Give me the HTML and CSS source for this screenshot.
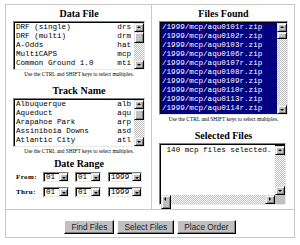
FILE: index.html
```html
<!DOCTYPE html>
<html>
<head>
  <title>File Order</title>
  <link rel="stylesheet" href="styles.css">
</head>
<body>
  <div class="frame">
    <div class="top">
      <div class="cell left">
        <p class="title">Data File</p>
        <div class="listbox short">
          <div class="items">
            <div class="item"><span>DRF (single)</span><span>drs</span></div>
            <div class="item"><span>DRF (multi)</span><span>drm</span></div>
            <div class="item"><span>A-Odds</span><span>hat</span></div>
            <div class="item"><span>MultiCAPS</span><span>mcp</span></div>
            <div class="item"><span>Common Ground 1.0</span><span>mti</span></div>
          </div>
          <div class="vscroll">
            <div class="arrow up"></div>
            <div class="track"><div class="thumb"></div></div>
            <div class="arrow down"></div>
          </div>
        </div>
        <p class="hint">Use the CTRL and SHIFT keys to select multiples.</p>

        <p class="title second">Track Name</p>
        <div class="listbox short">
          <div class="items">
            <div class="item"><span>Albuquerque</span><span>alb</span></div>
            <div class="item"><span>Aqueduct</span><span>aqu</span></div>
            <div class="item"><span>Arapahoe Park</span><span>arp</span></div>
            <div class="item"><span>Assiniboia Downs</span><span>asd</span></div>
            <div class="item"><span>Atlantic City</span><span>atl</span></div>
          </div>
          <div class="vscroll">
            <div class="arrow up"></div>
            <div class="track"><div class="thumb"></div></div>
            <div class="arrow down"></div>
          </div>
        </div>
        <p class="hint">Use the CTRL and SHIFT keys to select multiples.</p>

        <p class="title third">Date Range</p>
        <div class="date-row">
          <span class="date-label">From:</span>
          <div class="drop day"><span>01</span><div class="arrow down"></div></div>
          <div class="drop day"><span>01</span><div class="arrow down"></div></div>
          <div class="drop year"><span>1999</span><div class="arrow down"></div></div>
        </div>
        <div class="date-row">
          <span class="date-label">Thru:</span>
          <div class="drop day"><span>01</span><div class="arrow down"></div></div>
          <div class="drop day"><span>01</span><div class="arrow down"></div></div>
          <div class="drop year"><span>1999</span><div class="arrow down"></div></div>
        </div>
      </div>

      <div class="cell right">
        <p class="title">Files Found</p>
        <div class="listbox tall">
          <div class="items selected">
            <div class="item">/1999/mcp/aqu0101r.zip</div>
            <div class="item">/1999/mcp/aqu0102r.zip</div>
            <div class="item">/1999/mcp/aqu0103r.zip</div>
            <div class="item">/1999/mcp/aqu0106r.zip</div>
            <div class="item">/1999/mcp/aqu0107r.zip</div>
            <div class="item">/1999/mcp/aqu0108r.zip</div>
            <div class="item">/1999/mcp/aqu0109r.zip</div>
            <div class="item">/1999/mcp/aqu0110r.zip</div>
            <div class="item">/1999/mcp/aqu0113r.zip</div>
            <div class="item">/1999/mcp/aqu0114r.zip</div>
          </div>
          <div class="vscroll">
            <div class="arrow up"></div>
            <div class="track"><div class="thumb small"></div></div>
            <div class="arrow down"></div>
          </div>
        </div>
        <p class="hint">Use the CTRL and SHIFT keys to select multiples.</p>

        <p class="title fourth">Selected Files</p>
        <div class="textbox">
          <div class="text-main">
            <div class="text-area"> 140 mcp files selected.</div>
            <div class="vscroll">
              <div class="arrow up"></div>
              <div class="track"></div>
              <div class="arrow down"></div>
            </div>
          </div>
          <div class="hscroll">
            <div class="arrow left"></div>
            <div class="track"></div>
            <div class="arrow right"></div>
            <div class="corner"></div>
          </div>
        </div>
      </div>
    </div>

    <div class="bottom">
      <button class="win-button">Find Files</button>
      <button class="win-button">Select Files</button>
      <button class="win-button">Place Order</button>
    </div>
  </div>
</body>
</html>
```

FILE: styles.css
```css
body {
  margin: 0;
  background-color: white;
  color: black;
  font-family: "Liberation Serif", serif;
}

.frame {
  width: 288px;
  margin: 4px 0 0 5px;
  border: 1px solid #c8c8c8;
}

.top {
  display: grid;
  grid-template-columns: 146px 1fr;
  border-bottom: 1px solid #c8c8c8;
}

.cell {
  padding: 3px 6px 0 7px;
}

.left {
  border-right: 1px solid #c8c8c8;
  padding-bottom: 12px;
}

.title {
  margin: 0;
  font-size: 10px;
  line-height: 11px;
  font-weight: bold;
  text-align: center;
}

.title.second {
  margin-top: 8px;
}

.title.third {
  margin-top: 4px;
}

.title.fourth {
  margin-top: 8px;
}

.hint {
  margin: 1px 0 0;
  font-size: 5.4px;
  line-height: 6px;
  text-align: center;
  white-space: nowrap;
}

/* sunken list box */
.listbox {
  display: flex;
  margin-top: 2px;
  border: 1px solid;
  border-color: #808080 #e8e8e8 #e8e8e8 #808080;
  background-color: white;
}

.listbox.short {
  height: 47px;
}

.listbox.tall {
  height: 92px;
}

.items {
  flex: 1;
  min-width: 0;
  border-top: 1px solid #000;
  border-left: 1px solid #000;
  padding-left: 1px;
  font-family: "Liberation Mono", monospace;
  font-size: 7.6px;
  line-height: 9px;
  overflow: hidden;
}

.items.selected {
  background-color: #000080;
  color: white;
}

.item {
  display: flex;
  justify-content: space-between;
  padding-right: 3px;
  white-space: nowrap;
}

/* scroll bars */
.vscroll {
  display: flex;
  flex-direction: column;
  width: 10px;
  flex: none;
  border-top: 1px solid #000;
}

.track {
  flex: 1;
  background-color: white;
  background-image: repeating-conic-gradient(#c0c0c0 0 25%, white 0 50%);
  background-size: 2px 2px;
}

.arrow {
  position: relative;
  width: 10px;
  height: 9px;
  box-sizing: border-box;
  flex: none;
  background-color: #c0c0c0;
  border: 1px solid;
  border-color: #dfdfdf #000 #000 #dfdfdf;
  box-shadow: inset 1px 1px white, inset -1px -1px #808080;
}

.arrow::after {
  content: "";
  position: absolute;
  left: 2px;
  top: 2px;
  border-style: solid;
  border-color: transparent;
}

.arrow.up::after {
  border-width: 0 2px 2px;
  border-bottom-color: #000;
  top: 2px;
}

.arrow.down::after {
  border-width: 2px 2px 0;
  border-top-color: #000;
  top: 3px;
}

.arrow.left::after {
  border-width: 2px 2px 2px 0;
  border-right-color: #000;
  left: 2px;
  top: 1px;
}

.arrow.right::after {
  border-width: 2px 0 2px 2px;
  border-left-color: #000;
  left: 3px;
  top: 1px;
}

.thumb {
  height: 11px;
  box-sizing: border-box;
  background-color: #c0c0c0;
  border: 1px solid;
  border-color: #dfdfdf #000 #000 #dfdfdf;
  box-shadow: inset 1px 1px white, inset -1px -1px #808080;
}

.thumb.small {
  height: 7px;
}

/* date range */
.date-row {
  display: flex;
  align-items: center;
  margin-top: 3px;
  padding-left: 3px;
}

.date-row + .date-row {
  margin-top: 5px;
}

.date-label {
  width: 27px;
  font-size: 7px;
  font-weight: bold;
  letter-spacing: 0.4px;
}

.drop {
  display: flex;
  align-items: center;
  justify-content: space-between;
  height: 10px;
  box-sizing: border-box;
  border: 1px solid;
  border-color: #808080 #e8e8e8 #e8e8e8 #808080;
  box-shadow: inset 1px 1px #000;
  background-color: white;
  font-family: "Liberation Mono", monospace;
  font-size: 7.6px;
  padding-left: 2px;
}

.drop .arrow {
  height: 8px;
  width: 9px;
}

.drop.day {
  width: 26px;
  margin-right: 6px;
}

.drop.year {
  width: 34px;
  margin-left: 1px;
}

/* selected files box */
.textbox {
  margin-top: 2px;
  height: 62px;
  box-sizing: border-box;
  display: flex;
  flex-direction: column;
  width: 127px;
  border: 1px solid;
  border-color: #808080 #e8e8e8 #e8e8e8 #808080;
  background-color: white;
}

.text-main {
  flex: 1;
  display: flex;
  border-left: 1px solid #000;
  border-top: 1px solid #000;
}

.text-area {
  flex: 1;
  font-family: "Liberation Mono", monospace;
  font-size: 7.6px;
  line-height: 9px;
  padding: 1px 0 0 1px;
  white-space: pre;
}

.hscroll {
  display: flex;
  height: 9px;
  border-left: 1px solid #000;
}

.hscroll .track {
  flex: 1;
}

.corner {
  width: 10px;
  background-color: #c0c0c0;
}

/* buttons */
.bottom {
  display: flex;
  justify-content: center;
  gap: 3px;
  padding: 10px 0 3px;
}

.win-button {
  height: 14px;
  padding: 0 6px;
  background-color: #c0c0c0;
  border: 1px solid;
  border-color: white #000 #000 white;
  box-shadow: inset -1px -1px #808080;
  color: #222;
  font-family: "Liberation Sans", Arial, sans-serif;
  font-size: 8.3px;
}
```
